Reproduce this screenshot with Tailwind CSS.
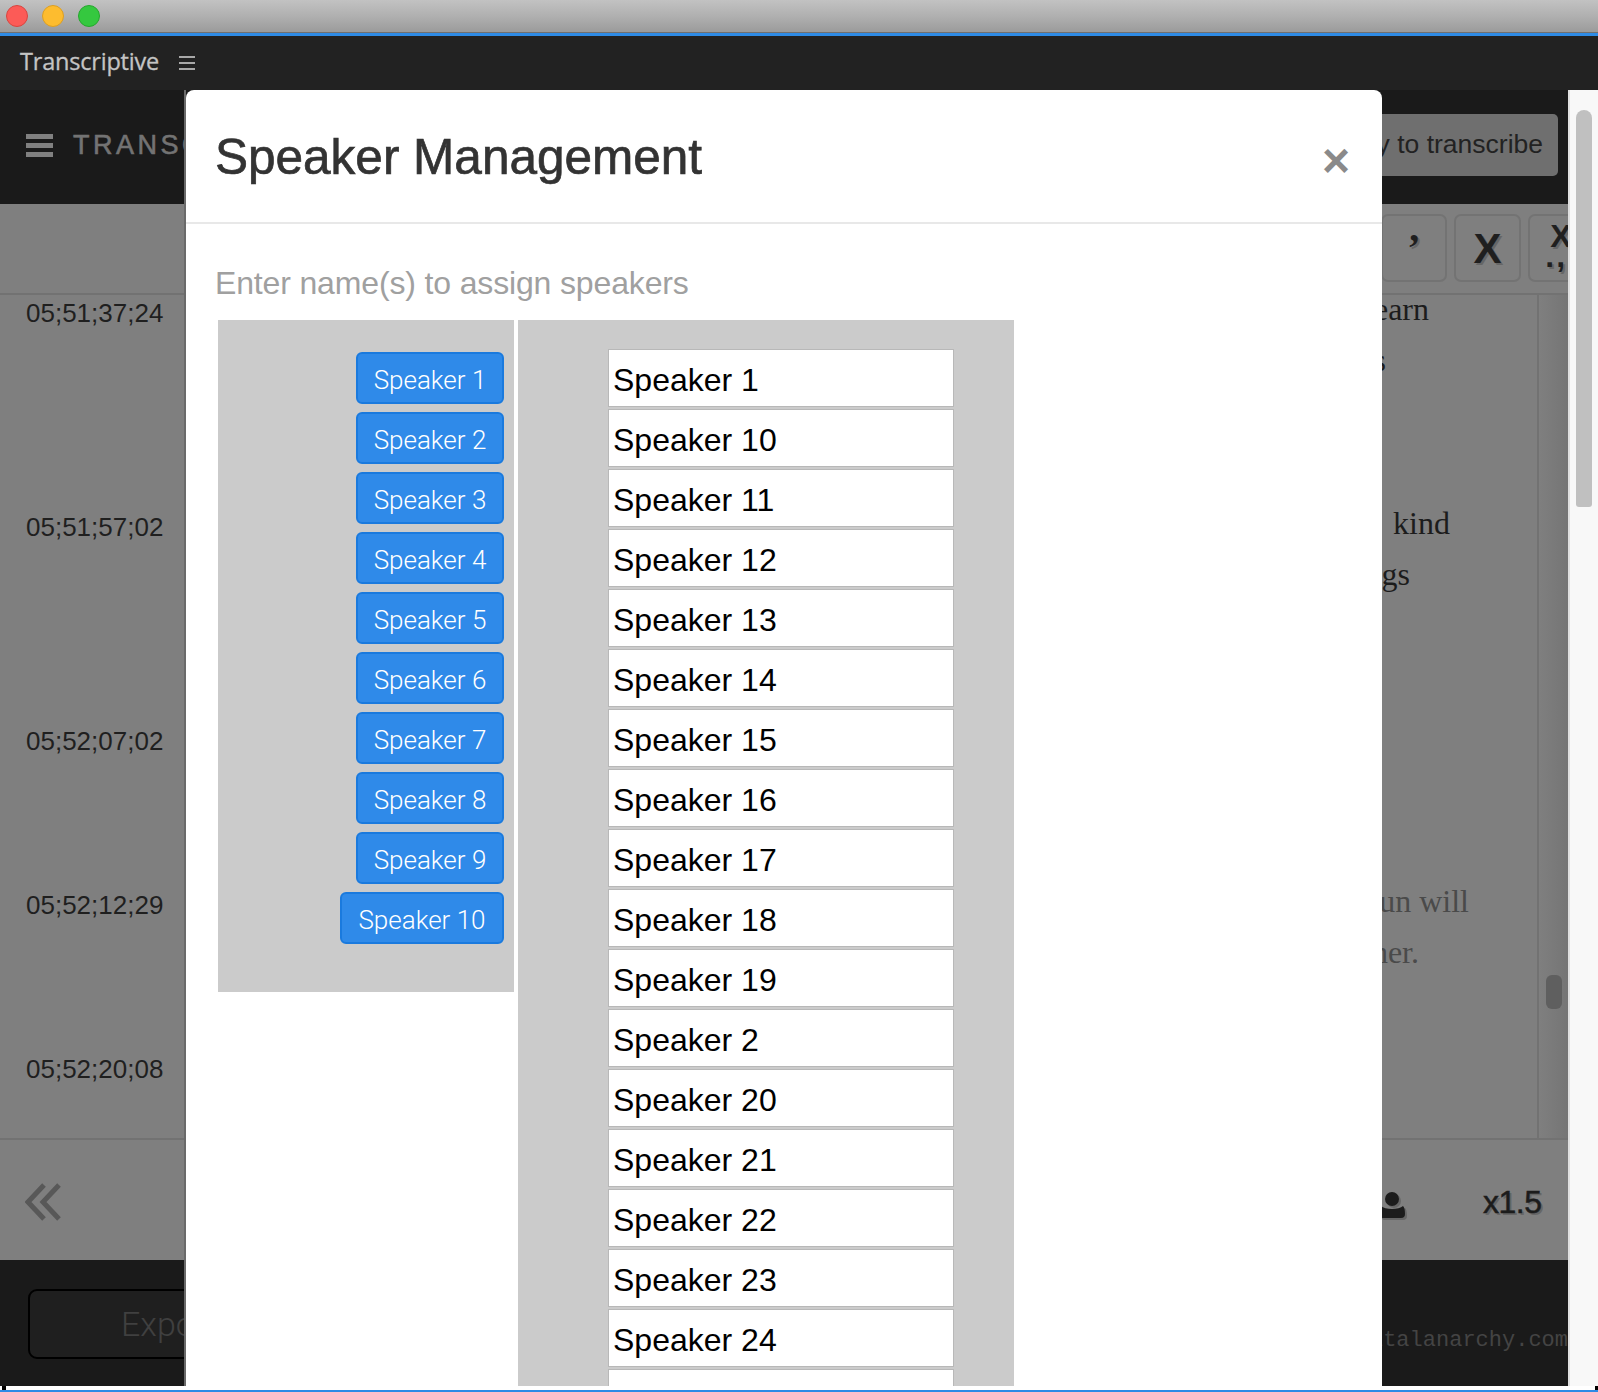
<!DOCTYPE html>
<html lang="en">
<head>
    <meta charset="UTF-8" />
    <title>Transcriptive</title>
    <script src="https://cdn.jsdelivr.net/npm/@tailwindcss/browser@4"></script>
</head>
<body class="bg-white font-['Liberation_Sans',Arial,sans-serif]">
<div class="relative flex flex-col w-[1598px] h-[1392px] overflow-hidden">

    <!-- Window title bar -->
    <div class="flex items-center gap-[14px] h-[32px] pl-[6px] bg-gradient-to-b from-[#c2c2c2] via-[#b0b0b0] to-[#9b9b9b]">
        <span class="w-[22px] h-[22px] rounded-full bg-[#fc5b57] border border-[#d9453f]"></span>
        <span class="w-[22px] h-[22px] rounded-full bg-[#fdbc2f] border border-[#dd9f22]"></span>
        <span class="w-[22px] h-[22px] rounded-full bg-[#35c83f] border border-[#25a82d]"></span>
    </div>
    <div class="h-px bg-[#707070]"></div>
    <div class="h-[3px] bg-[#2e8be6]"></div>

    <!-- Panel tab -->
    <div class="flex items-center h-[54px] pl-[20px] bg-[#222222]">
        <span class="-mt-[2px] text-[23.5px] text-[#c4c4c4] font-['Open_Sans',sans-serif] tracking-[-0.2px] [-webkit-text-stroke:0.3px_#c4c4c4]">Transcriptive</span>
        <span class="flex flex-col gap-[4px] ml-[20px] w-[16px]">
            <i class="h-[2px] bg-[#a8a8a8]"></i>
            <i class="h-[2px] bg-[#a8a8a8]"></i>
            <i class="h-[2px] bg-[#a8a8a8]"></i>
        </span>
    </div>

    <div class="flex h-[1296px]">
        <div class="flex flex-col w-[1568px]">
            <!-- App header -->
            <div class="flex items-center justify-between h-[114px] pl-[26px] pr-[10px] pb-[4px] bg-[#1a1a1a]">
                <div class="flex items-center">
                    <span class="flex flex-col gap-[4px] w-[27px]">
                        <i class="h-[5px] bg-[#808080]"></i>
                        <i class="h-[5px] bg-[#808080]"></i>
                        <i class="h-[5px] bg-[#808080]"></i>
                    </span>
                    <span class="ml-[20px] text-[27px] tracking-[3.5px] text-[#737373] [-webkit-text-stroke:0.6px_#737373]">TRANSCRIPTIVE</span>
                </div>
                <div class="flex items-center justify-end w-[300px] h-[62px] pr-[15px] rounded-[5px] bg-[#6f6f6f] text-[26.5px] text-[#222222]">Ready to transcribe</div>
            </div>

            <!-- Dimmed transcript area -->
            <div class="flex flex-col h-[1056px] bg-[#7f7f7f]">
                <div class="flex justify-end gap-[7px] h-[91px] pt-[10px] -mr-[26px] border-b-2 border-[#727272]">
                    <div class="flex justify-center w-[66px] h-[68px] border-2 border-[#737373] rounded-[7px] font-['Liberation_Serif',serif] font-bold text-[40px] leading-[64px] text-[#1f1f1f] [text-shadow:2px_2px_0_#666666]">’</div>
                    <div class="flex items-center justify-center w-[67px] h-[68px] border-2 border-[#737373] rounded-[7px] font-bold text-[42px] text-[#1f1f1f] [text-shadow:2px_2px_0_#666666]">X</div>
                    <div class="flex flex-col items-center w-[66px] h-[68px] border-2 border-[#737373] rounded-[7px] font-bold text-[32px] leading-[28px] pt-[6px] text-[#1f1f1f] [text-shadow:2px_2px_0_#666666]">X<span class="leading-[12px] tracking-[2px]">.,'</span></div>
                </div>

                <div class="flex h-[843px]">
                    <div class="flex-1 flex flex-col pl-[26px] text-[26px] text-[#1f1f1f] border-r-2 border-[#727272]">
                        <div class="flex h-[214px]">
                            <span class="w-[160px] -mt-[1px]">05;51;37;24</span>
                            <div class="flex-1 font-['Liberation_Serif',serif] text-[32px] leading-[51px] text-[#1c1c1c] text-right">
                                <p class="pr-[108px] -mt-[11px]">to learn</p>
                                <p class="pr-[151px]">this</p>
                            </div>
                        </div>
                        <div class="flex h-[214px]">
                            <span class="w-[160px] -mt-[1px]">05;51;57;02</span>
                            <div class="flex-1 font-['Liberation_Serif',serif] text-[32px] leading-[51px] text-[#1c1c1c] text-right">
                                <p class="pr-[87px] -mt-[11px]">kind</p>
                                <p class="pr-[127px]">things</p>
                            </div>
                        </div>
                        <div class="flex h-[164px]">
                            <span class="w-[160px] -mt-[1px]">05;52;07;02</span>
                        </div>
                        <div class="flex h-[164px]">
                            <span class="w-[160px] -mt-[1px]">05;52;12;29</span>
                            <div class="flex-1 font-['Liberation_Serif',serif] text-[32px] leading-[51px] text-[#4a4a4a] text-right">
                                <p class="pr-[68px] -mt-[11px]">fun will</p>
                                <p class="pr-[118px]">other.</p>
                            </div>
                        </div>
                        <div class="flex h-[87px]">
                            <span class="w-[160px] -mt-[1px]">05;52;20;08</span>
                        </div>
                    </div>
                    <div class="w-[29px] bg-gradient-to-r from-[#7f7f7f] to-[#757575] pl-[7px] pt-[680px]">
                        <div class="w-[16px] h-[34px] rounded-[6px] bg-[#5f5f5f]"></div>
                    </div>
                </div>

                <div class="flex items-center h-[122px] pt-[4px] pl-[25px] border-t-2 border-[#727272]">
                    <svg class="w-[36px] h-[38px]" viewBox="0 0 36 38" fill="none" stroke="#585858" stroke-width="5">
                        <path d="M19 2 3 19 19 36" />
                        <path d="M34 2 18 19 34 36" />
                    </svg>
                    <svg class="ml-[1311px] mt-[6px] w-[40px] h-[28px] drop-shadow-[2px_2px_0_#666666]" viewBox="0 0 40 28" fill="#1c1c1c">
                        <circle cx="20" cy="8" r="7" />
                        <path d="M9 15 C13 19 27 19 31 15 Q33 17 33 23 Q33 27 29 27 H11 Q7 27 7 23 Q7 17 9 15 Z" />
                    </svg>
                    <span class="ml-[71px] text-[32px] text-[#1c1c1c] [-webkit-text-stroke:0.5px_#1c1c1c] tracking-[-0.5px] [text-shadow:2px_2px_0_#666666]">x1.5</span>
                </div>
            </div>

            <!-- Footer -->
            <div class="relative flex items-center h-[126px] pl-[28px] bg-[#1a1a1a]">
                <div class="w-[260px] h-[70px] mb-[-2px] pl-[91px] flex items-center border-2 border-black rounded-[9px] bg-[#1f1f1f] font-['Roboto',sans-serif] font-light text-[34px] text-[#404040]">Export</div>
                <span class="ml-auto mt-[34px] font-['Liberation_Mono',monospace] text-[22px] text-[#444444] whitespace-nowrap">www.digitalanarchy.com</span>
            </div>
        </div>

        <!-- Page scrollbar -->
        <div class="w-[30px] pl-[8px] pt-[20px] bg-[#f8f8f8] border-l-2 border-[#e0e0e0]">
            <div class="w-[16px] h-[397px] rounded-t-[8px] rounded-b-[3px] bg-[#c0c0c0] -ml-[2px]"></div>
        </div>
    </div>

    <div class="flex justify-between h-[4px] px-[2px] bg-white">
        <i class="w-[4px] bg-black"></i>
        <i class="w-[3px] -mr-[2px] bg-black"></i>
    </div>
    <div class="h-[2px] bg-[#2e8be6]"></div>

    <!-- Speaker Management modal -->
    <div class="absolute left-[184px] top-[90px] w-[1198px] h-[1296px] border-l-2 border-[#6a6a6a] overflow-hidden">
        <div class="h-full bg-white rounded-t-[8px] overflow-hidden">
            <div class="flex items-center justify-between h-[134px] pl-[29px] pr-[32px] border-b-2 border-[#e8e8e8]">
                <h1 class="text-[49.5px] text-[#333333] [-webkit-text-stroke:0.7px_#333333] mt-[2px]">Speaker Management</h1>
                <span class="mt-[10px] font-bold text-[48px] leading-none text-[#8a8a8a]">×</span>
            </div>
            <p class="pl-[29px] pt-[40px] h-[96px] text-[32px] leading-[38px] text-[#a0a0a0] tracking-[-0.15px]">Enter name(s) to assign speakers</p>
            <div class="flex items-start gap-[4px] pl-[32px]">
                <div class="flex flex-col items-end gap-[8px] w-[296px] pt-[32px] pb-[48px] pr-[10px] bg-[#cbcbcb] font-['Roboto',sans-serif] font-light text-[26px] text-white">
                    <button class="w-[148px] h-[52px] pt-[4px] border-2 border-[#1a7ade] rounded-[6px] bg-[#2f8ae9]">Speaker 1</button>
                    <button class="w-[148px] h-[52px] pt-[4px] border-2 border-[#1a7ade] rounded-[6px] bg-[#2f8ae9]">Speaker 2</button>
                    <button class="w-[148px] h-[52px] pt-[4px] border-2 border-[#1a7ade] rounded-[6px] bg-[#2f8ae9]">Speaker 3</button>
                    <button class="w-[148px] h-[52px] pt-[4px] border-2 border-[#1a7ade] rounded-[6px] bg-[#2f8ae9]">Speaker 4</button>
                    <button class="w-[148px] h-[52px] pt-[4px] border-2 border-[#1a7ade] rounded-[6px] bg-[#2f8ae9]">Speaker 5</button>
                    <button class="w-[148px] h-[52px] pt-[4px] border-2 border-[#1a7ade] rounded-[6px] bg-[#2f8ae9]">Speaker 6</button>
                    <button class="w-[148px] h-[52px] pt-[4px] border-2 border-[#1a7ade] rounded-[6px] bg-[#2f8ae9]">Speaker 7</button>
                    <button class="w-[148px] h-[52px] pt-[4px] border-2 border-[#1a7ade] rounded-[6px] bg-[#2f8ae9]">Speaker 8</button>
                    <button class="w-[148px] h-[52px] pt-[4px] border-2 border-[#1a7ade] rounded-[6px] bg-[#2f8ae9]">Speaker 9</button>
                    <button class="w-[164px] h-[52px] pt-[4px] border-2 border-[#1a7ade] rounded-[6px] bg-[#2f8ae9]">Speaker 10</button>
                </div>
                <div class="flex flex-col gap-[2px] w-[496px] h-[1100px] pt-[29px] pl-[90px] bg-[#cbcbcb] text-[32px] text-black">
                    <input readonly value="Speaker 1" class="shrink-0 w-[346px] h-[58px] pt-[5px] pl-[4px] border border-[#b8b8b8] bg-white" />
                    <input readonly value="Speaker 10" class="shrink-0 w-[346px] h-[58px] pt-[5px] pl-[4px] border border-[#b8b8b8] bg-white" />
                    <input readonly value="Speaker 11" class="shrink-0 w-[346px] h-[58px] pt-[5px] pl-[4px] border border-[#b8b8b8] bg-white" />
                    <input readonly value="Speaker 12" class="shrink-0 w-[346px] h-[58px] pt-[5px] pl-[4px] border border-[#b8b8b8] bg-white" />
                    <input readonly value="Speaker 13" class="shrink-0 w-[346px] h-[58px] pt-[5px] pl-[4px] border border-[#b8b8b8] bg-white" />
                    <input readonly value="Speaker 14" class="shrink-0 w-[346px] h-[58px] pt-[5px] pl-[4px] border border-[#b8b8b8] bg-white" />
                    <input readonly value="Speaker 15" class="shrink-0 w-[346px] h-[58px] pt-[5px] pl-[4px] border border-[#b8b8b8] bg-white" />
                    <input readonly value="Speaker 16" class="shrink-0 w-[346px] h-[58px] pt-[5px] pl-[4px] border border-[#b8b8b8] bg-white" />
                    <input readonly value="Speaker 17" class="shrink-0 w-[346px] h-[58px] pt-[5px] pl-[4px] border border-[#b8b8b8] bg-white" />
                    <input readonly value="Speaker 18" class="shrink-0 w-[346px] h-[58px] pt-[5px] pl-[4px] border border-[#b8b8b8] bg-white" />
                    <input readonly value="Speaker 19" class="shrink-0 w-[346px] h-[58px] pt-[5px] pl-[4px] border border-[#b8b8b8] bg-white" />
                    <input readonly value="Speaker 2" class="shrink-0 w-[346px] h-[58px] pt-[5px] pl-[4px] border border-[#b8b8b8] bg-white" />
                    <input readonly value="Speaker 20" class="shrink-0 w-[346px] h-[58px] pt-[5px] pl-[4px] border border-[#b8b8b8] bg-white" />
                    <input readonly value="Speaker 21" class="shrink-0 w-[346px] h-[58px] pt-[5px] pl-[4px] border border-[#b8b8b8] bg-white" />
                    <input readonly value="Speaker 22" class="shrink-0 w-[346px] h-[58px] pt-[5px] pl-[4px] border border-[#b8b8b8] bg-white" />
                    <input readonly value="Speaker 23" class="shrink-0 w-[346px] h-[58px] pt-[5px] pl-[4px] border border-[#b8b8b8] bg-white" />
                    <input readonly value="Speaker 24" class="shrink-0 w-[346px] h-[58px] pt-[5px] pl-[4px] border border-[#b8b8b8] bg-white" />
                    <input readonly value="Speaker 25" class="shrink-0 w-[346px] h-[58px] pt-[5px] pl-[4px] border border-[#b8b8b8] bg-white" />
                </div>
            </div>
        </div>
    </div>
</div>
</body>
</html>
